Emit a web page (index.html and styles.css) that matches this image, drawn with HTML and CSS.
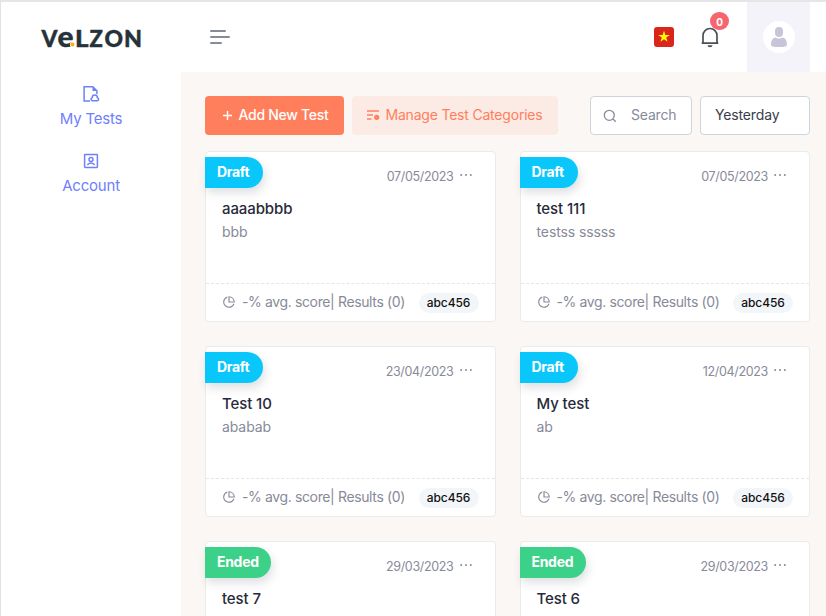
FILE: index.html
```html
<!DOCTYPE html>
<html lang="en">
<head>
<meta charset="utf-8">
<title>My Tests</title>
<link rel="stylesheet" href="styles.css">
</head>
<body>
<svg class="defs" width="0" height="0">
  <symbol id="pie" viewBox="0 0 24 24"><path d="M9 2.46v2.16A8 8 0 1 0 19.38 15h2.16A10 10 0 1 1 9 2.46zM12 2a10 10 0 0 1 10 10c0 .34-.02.67-.05 1H11V2.05c.33-.03.66-.05 1-.05zm1 2.06V11h6.94A8 8 0 0 0 13 4.06z"/></symbol>
  <symbol id="dots" viewBox="0 0 12 4"><circle cx="1.2" cy="2" r="1"/><circle cx="6" cy="2" r="1"/><circle cx="10.8" cy="2" r="1"/></symbol>
</svg>
<div class="app">
  <aside class="sidebar">
    <div class="brand">
      <svg class="logo" width="104" height="26" viewBox="0 0 104 26">
        <text x="0.5" y="22.5" textLength="16" lengthAdjust="spacingAndGlyphs">V</text>
        <text class="logo-e" x="16.5" y="22.5" textLength="16" lengthAdjust="spacingAndGlyphs">e</text>
        <text x="34" y="22.5" textLength="13.5" lengthAdjust="spacingAndGlyphs">L</text>
        <text x="48.5" y="22.5">Z</text>
        <text x="63.5" y="22.5" textLength="18.5" lengthAdjust="spacingAndGlyphs">O</text>
        <text x="83" y="22.5" textLength="18" lengthAdjust="spacingAndGlyphs">N</text>
        <circle class="logo-halo" cx="31.5" cy="20.5" r="2.6"/><circle class="logo-dot" cx="31.5" cy="20.5" r="1.9"/>
      </svg>
    </div>
    <nav class="nav">
      <a class="nav-item">
        <svg width="18" height="18" viewBox="0 0 18 18" fill="none" stroke="currentColor" stroke-width="1.5"><path d="M8 15.9H2.1V1.7h8.7l4.1 4.1v3.3"/><path d="M10.5 1.7V6h4.4z" fill="currentColor" stroke="none"/><path d="M10.3 15.8a1.6 1.6 0 0 1-.1-3.1 2.6 2.6 0 0 1 5.2 0 1.6 1.6 0 0 1 0 3.1z"/></svg>
        <span>My Tests</span>
      </a>
      <a class="nav-item">
        <svg width="18" height="18" viewBox="0 0 18 18" fill="none" stroke="currentColor" stroke-width="1.5"><rect x="2.6" y="2.6" width="12.8" height="12.8" rx=".6"/><circle cx="9" cy="7.6" r="2"/><path d="M5.3 13c.7-1.4 2.1-2.1 3.7-2.1s3 .7 3.7 2.1"/></svg>
        <span>Account</span>
      </a>
    </nav>
  </aside>
  <div class="main">
    <header class="topbar">
      <div class="burger"><i></i><i></i><i></i></div>
      <div class="tools">
        <svg class="flag" width="20" height="20" viewBox="0 0 20 20"><rect width="20" height="20" rx="3" fill="#da251d"/><path fill="#ff0" d="M10 3.8l1.35 4.2h4.4l-3.55 2.6 1.35 4.2L10 12.2l-3.55 2.6L7.8 10.6 4.25 8h4.4z"/></svg>
        <div class="bell">
          <svg width="20" height="22" viewBox="0 0 20 22" fill="none" stroke="#495057" stroke-width="1.7"><path d="M3 17.2V9.500a7 7 0 0 1 14 0v7.700M1.700 17.200h16.600"/><path d="M7.500 19.300h5a2.500 2 0 0 1-5 0z" fill="#495057" stroke="none"/></svg>
          <span class="count">0</span>
        </div>
        <div class="user">
          <svg width="32" height="32" viewBox="0 0 32 32"><circle cx="16" cy="16" r="16" fill="#fff"/><g fill="#c8c5d8"><rect x="12" y="6" width="8" height="10" rx="4"/><path d="M8 23.5c0-4 2-7 4.5-7 1 .8 2.2 1 3.5 1s2.5-.2 3.5-1c2.5 0 4.5 3 4.5 7 0 2-2.5 2.5-8 2.5s-8-.5-8-2.5z"/></g></svg>
        </div>
      </div>
    </header>
    <main class="content">
      <div class="actions">
        <button class="btn btn-add"><svg width="9" height="9" viewBox="0 0 9 9"><path d="M4.5 0v9M0 4.5h9" stroke="currentColor" stroke-width="1.4"/></svg><span>Add New Test</span></button>
        <button class="btn btn-soft"><svg width="13" height="11" viewBox="0 0 13 11"><path d="M0 1h12M0 5h6M0 9h4.5" stroke="currentColor" stroke-width="1.3"/><circle cx="9.7" cy="7.3" r="1.5" fill="none" stroke="currentColor" stroke-width="2.2"/></svg><span>Manage Test Categories</span></button>
        <div class="field search"><svg width="14" height="14" viewBox="0 0 14 14" fill="none" stroke="currentColor" stroke-width="1.3"><circle cx="6.3" cy="6.3" r="5"/><path d="M10 10l2.8 2.8"/></svg><span>Search</span></div>
        <div class="field select"><span>Yesterday</span></div>
      </div>
      <div class="grid">
        <article class="card"><span class="ribbon draft">Draft</span><div class="meta"><time>07/05/2023</time><svg><use href="#dots"/></svg></div><div class="body"><h5>aaaabbbb</h5><p>bbb</p></div><footer><svg class="pie"><use href="#pie"/></svg><span class="score">-% avg. score| Results (0)</span><span class="tag">abc456</span></footer></article>
        <article class="card"><span class="ribbon draft">Draft</span><div class="meta"><time>07/05/2023</time><svg><use href="#dots"/></svg></div><div class="body"><h5>test 111</h5><p>testss sssss</p></div><footer><svg class="pie"><use href="#pie"/></svg><span class="score">-% avg. score| Results (0)</span><span class="tag">abc456</span></footer></article>
        <article class="card"><span class="ribbon draft">Draft</span><div class="meta"><time>23/04/2023</time><svg><use href="#dots"/></svg></div><div class="body"><h5>Test 10</h5><p>ababab</p></div><footer><svg class="pie"><use href="#pie"/></svg><span class="score">-% avg. score| Results (0)</span><span class="tag">abc456</span></footer></article>
        <article class="card"><span class="ribbon draft">Draft</span><div class="meta"><time>12/04/2023</time><svg><use href="#dots"/></svg></div><div class="body"><h5>My test</h5><p>ab</p></div><footer><svg class="pie"><use href="#pie"/></svg><span class="score">-% avg. score| Results (0)</span><span class="tag">abc456</span></footer></article>
        <article class="card"><span class="ribbon ended">Ended</span><div class="meta"><time>29/03/2023</time><svg><use href="#dots"/></svg></div><div class="body"><h5>test 7</h5></div></article>
        <article class="card"><span class="ribbon ended">Ended</span><div class="meta"><time>29/03/2023</time><svg><use href="#dots"/></svg></div><div class="body"><h5>Test 6</h5></div></article>
      </div>
    </main>
  </div>
</div>
</body>
</html>
```
FILE: styles.css
```css
* { box-sizing: border-box; }
body { margin: 0; overflow: hidden; font-family: Inter, "Liberation Sans", sans-serif; font-size: 14px; color: #212529; background: #fff; }
.defs { position: absolute; }
svg { display: block; flex: none; }
.app { display: flex; height: 616px; border-top: 2px solid #e6e6e6; border-left: 1px solid #e2e2e2; }
.sidebar { width: 180px; flex: none; }
.brand { height: 70px; display: flex; align-items: center; padding-left: 40px; }
.logo { overflow: visible; font-family: Lato, sans-serif; font-weight: 900; font-size: 22px; fill: #26323a; stroke: #26323a; stroke-width: .4px; stroke-linejoin: round; }
.logo-e { font-size: 29px; }
.logo circle { stroke: none; }
.logo-halo { fill: #fff; }
.logo-dot { fill: #ffb000; }
.nav { display: flex; flex-direction: column; gap: 23px; padding-top: 13px; }
.nav-item { display: flex; flex-direction: column; align-items: center; gap: 5px; color: #6f80fc; font-size: 15px; line-height: 21px; letter-spacing: -.2px; }
.main { flex: 1; min-width: 0; display: flex; flex-direction: column; }
.topbar { height: 70px; flex: none; display: flex; align-items: center; justify-content: space-between; padding: 0 16px 0 29px; }
.burger { display: flex; flex-direction: column; gap: 4px; }
.burger i { height: 2px; width: 20px; border-radius: 1px; background: #878a99; }
.burger i:first-child { width: 16px; }
.burger i:last-child { width: 12px; }
.tools { display: flex; align-items: center; height: 70px; }
.bell { position: relative; margin: 0 26px; width: 21px; }
.count { position: absolute; left: 10px; top: -14px; width: 19px; height: 18px; border-radius: 9px; background: #f7666e; color: #fff; font-size: 10px; font-weight: 700; line-height: 20px; text-align: center; }
.user { width: 63px; height: 70px; display: flex; align-items: center; justify-content: center; background: #f3f3f9; }
.content { flex: 1; background: #faf7f4; padding: 24px 16px 0 24px; overflow: hidden; }
.actions { display: flex; height: 39px; }
.btn { border: 0; border-radius: 4px; font: inherit; display: flex; align-items: center; justify-content: center; white-space: nowrap; padding: 0; }
.actions span { padding-bottom: 2px; }
.btn-add { width: 139px; margin-right: 8px; padding-left: 2px; gap: 7px; background: #ff7f5d; color: #fff; font-weight: 500; letter-spacing: -.28px; }
.btn-soft { width: 206px; gap: 5px; background: #fceae4; color: #ff7f5d; letter-spacing: -.2px; }
.field { display: flex; align-items: center; border: 1px solid #ced4da; border-radius: 4px; background: #fff; }
.search { width: 102px; margin-left: auto; padding-left: 12px; gap: 14px; color: #878a99; letter-spacing: -.2px; }
.select { width: 110px; margin-left: 8px; padding-left: 14px; color: #3a3d49; letter-spacing: -.15px; }
.grid { display: grid; grid-template-columns: 1fr 1fr; column-gap: 24px; row-gap: 24px; padding-top: 16px; }
.card { position: relative; display: flex; flex-direction: column; height: 171px; background: #fff; border: 1px solid #e9ebec; border-radius: 4px; }
.ribbon { position: absolute; left: -1px; top: 5px; height: 31px; line-height: 30px; padding: 0 12px; border-radius: 0 16px 16px 0; color: #fff; font-size: 14px; font-weight: 700; letter-spacing: -.3px; box-shadow: 2px 5px 10px rgba(56, 65, 74, .16); }
.draft { width: 58px; background: #0ac7fb; }
.ended { width: 66px; background: #3cd188; }
.meta { display: flex; justify-content: flex-end; gap: 6px; height: 48px; padding: 17px 23px 0 0; color: #878a99; font-size: 12.5px; line-height: 16px; letter-spacing: -.33px; }
.meta svg { width: 12px; height: 4px; margin-top: 4px; fill: #878a99; }
.body { flex: 1; padding: 0 16px; }
h5 { margin: 0; font-size: 15px; line-height: 18px; font-weight: 500; letter-spacing: -.1px; color: #272a3a; }
p { margin: 6px 0 0; font-size: 14px; line-height: 16px; letter-spacing: -.1px; color: #878a99; }
footer { display: flex; align-items: center; height: 38px; border-top: 1px dashed #e4e6e8; padding: 0 16px; color: #878a99; }
.pie { width: 14px; height: 14px; margin: 0 6px 2px 0; fill: currentColor; }
.score { white-space: nowrap; letter-spacing: -.37px; padding-bottom: 2px; }
.tag { margin-left: auto; width: 60px; height: 20px; border-radius: 10px; background: #f3f6f9; color: #111; font-size: 12px; line-height: 20px; font-weight: 500; letter-spacing: -.05px; text-align: center; }
```
